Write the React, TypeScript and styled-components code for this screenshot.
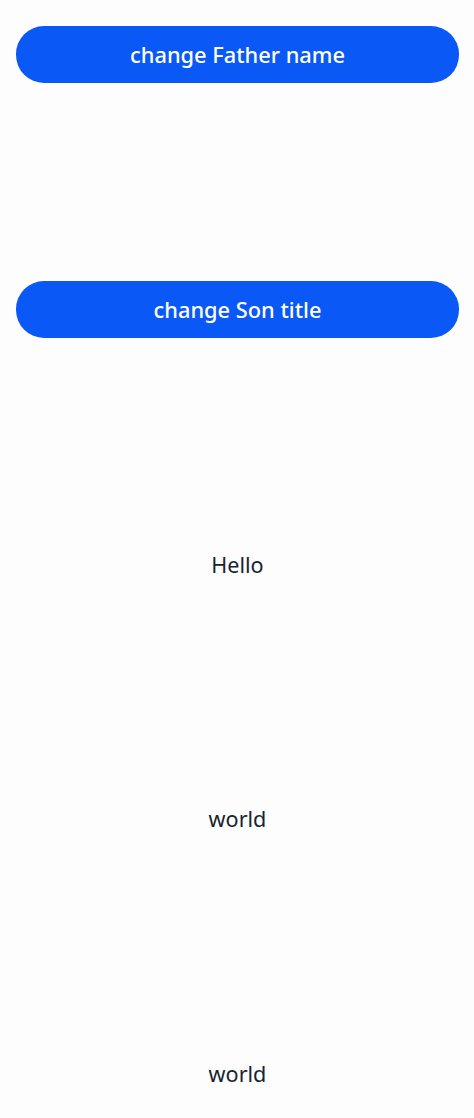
import React from "react";
import styled, { createGlobalStyle } from "styled-components";

const Global = createGlobalStyle`
  html, body { margin: 0; padding: 0; background: #fdfdfd; }
  body { font-family: "Noto Sans", Roboto, sans-serif; }
`;

const Page = styled.div`
  display: flex;
  flex-direction: column;
  align-items: center;
  gap: 198.5px;
  padding: 26px 15px 0 16px;
  height: 1118px;
  box-sizing: border-box;
`;

const Button = styled.button`
  width: 100%;
  height: 56.5px;
  flex-shrink: 0;
  border: none;
  border-radius: 28px;
  background: #0a59f7;
  color: #ffffff;
  font-family: "Noto Sans", Roboto, sans-serif;
  font-size: 21.8px;
  font-weight: 500;
  display: flex;
  align-items: center;
  justify-content: center;
  padding: 0;
  cursor: pointer;
`;

const Label = styled.div`
  height: 56px;
  flex-shrink: 0;
  display: flex;
  align-items: center;
  justify-content: center;
  font-size: 21.6px;
  color: #182431;
`;

export default function App() {
  return (
    <>
      <Global />
      <Page>
        <Button>change Father name</Button>
        <Button>change Son title</Button>
        <Label>Hello</Label>
        <Label>world</Label>
        <Label>world</Label>
      </Page>
    </>
  );
}
